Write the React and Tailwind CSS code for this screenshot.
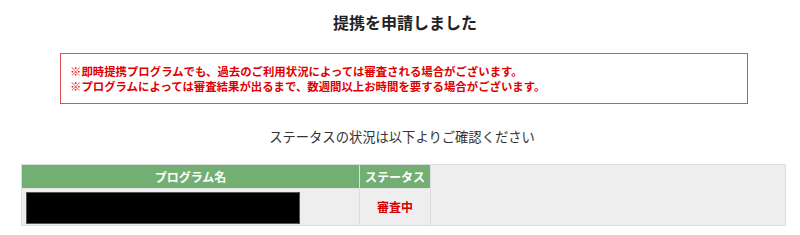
export default function App() {
    return (
        <div
            className="w-[800px] h-[235px] bg-white overflow-hidden"
            style={{ fontFamily: '"Noto Sans CJK JP", "Noto Sans", sans-serif' }}
        >
            {/* Title */}
            <h1 className="pt-[11px] text-center text-[16px] leading-[22px] font-bold text-[#222] pl-[10px]">
                提携を申請しました
            </h1>

            {/* Notice */}
            <div className="mt-[20px] ml-[60px] w-[688px] h-[51px] border border-[#e05252] pl-[9px] pt-[10px]">
                <p className="text-[11.4px] leading-[15px] font-bold text-[#e00000] whitespace-nowrap">
                    ※即時提携プログラムでも、過去のご利用状況によっては審査される場合がございます。
                </p>
                <p className="text-[11.4px] leading-[15px] font-bold text-[#e00000] whitespace-nowrap">
                    ※プログラムによっては審査結果が出るまで、数週間以上お時間を要する場合がございます。
                </p>
            </div>

            {/* Status lead */}
            <p className="mt-[24px] text-center text-[13.3px] leading-[18px] text-[#333] pl-[4px]">
                ステータスの状況は以下よりご確認ください
            </p>

            {/* Status table */}
            <div className="mt-[18px] ml-[21px] w-[765px] h-[62px] flex bg-[#eeeeee] border border-[#dddddd]">
                <div className="flex flex-col">
                    <div className="flex h-[23px]">
                        <div className="w-[338px] bg-[#73af73] border-r border-[#dddddd] flex items-center justify-center text-white text-[12px] font-bold">
                            プログラム名
                        </div>
                        <div className="w-[71px] bg-[#73af73] border-r border-[#dddddd] flex items-center justify-center text-white text-[12px] font-bold">
                            ステータス
                        </div>
                    </div>
                    <div className="flex flex-1 border-t border-[#e6e6e6]">
                        <div className="w-[338px] border-r border-[#dddddd] pl-[4px] pt-[3px]">
                            <div className="w-[274px] h-[32px] bg-black border border-[#555]" />
                        </div>
                        <div className="w-[71px] border-r border-[#dddddd] flex items-center justify-center text-[#d40000] text-[12px] font-bold">
                            審査中
                        </div>
                    </div>
                </div>
                <div className="flex-1" />
            </div>
        </div>
    );
}
